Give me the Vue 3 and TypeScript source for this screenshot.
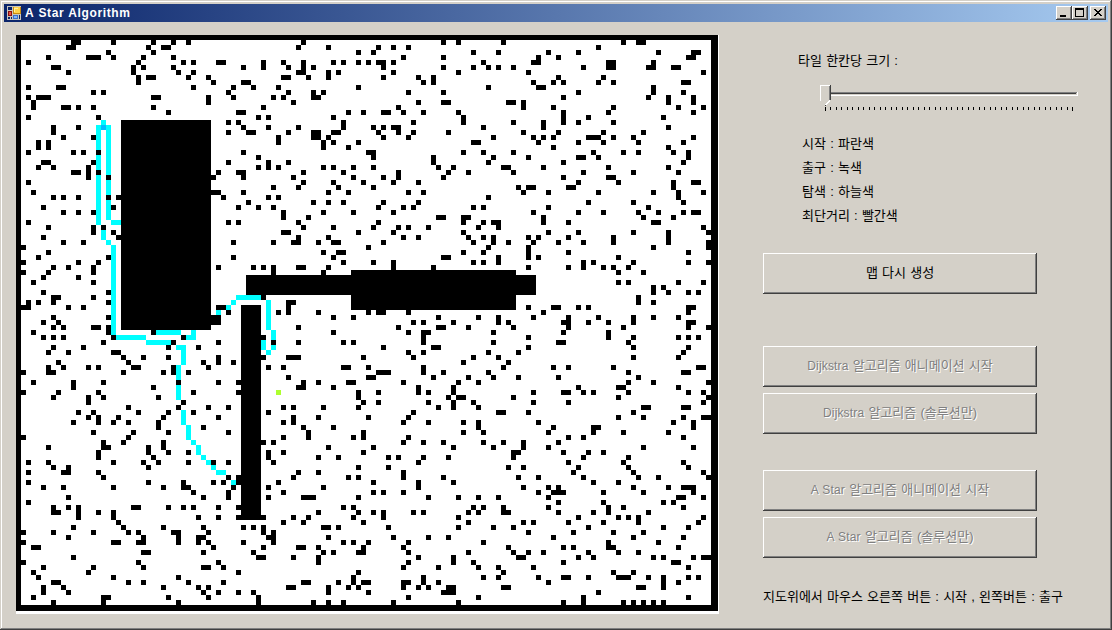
<script setup lang="ts">
interface Section {
  col: number
  row: number
  lines: string
}

const TILE = 5
const MAP_WIDTH = 702
const MAP_HEIGHT = 576

// Obstacle tiles by map section: one line per row, separated by "/",
// each entry a column or an inclusive range of columns.
const obstacles: Section[] = [
  {
    col: 0,
    row: 1,
    lines:
      '11-12 19 27 31 34/10-11 26 29-30/18 27/6 14-16 19 25 31/2 24 33 35 40-41/7-8 23 25 31/10 23 32 35/24 26-27 34 38/24 39/2 8-9 35 43/15 17 42/2 4-6 27-28 38 43/3 38/3 9-10 12 15 27',
  },
  {
    col: 0,
    row: 15,
    lines:
      '30 44-45/2 16/42 44/7 12 45/7 42 46-47/9 15/4 6/4 6/2 11 13 16 45//5-6 15 42/4 7 14/11-12 14 16 40 44-45/14 18 39 45/2//3 39-40 45/7 9 12 18 20 41/46/5 19 44/9 12 15//2 42 44/6 15 17/15 19/5 20/9 13 43/1/6/4 18 43/1 12 16/7 10 15 40 47/1 6 15/5 12/3 15//5 18/7-8 15/2 4 7 18/1-2 10 13 40-41/42/7 18 39-40/5 8 39-40/7 9 15-16 18/3 18 27/5 7 9 19 33',
  },
  {
    col: 0,
    row: 61,
    lines:
      '17 31 40 51/7 13 30 36/6 10 19-20/21 25 30 40 49 54-55/8 22 37 40 43/6 9 14 16 23-24 31 38 50 53/1 6-7 21 29 31 34/54/3 11 17 32 40 44/11 27/1 8 16 35 44/7 14 17 28/14 33/22 32 38 42/12 15 24 30 35/14 16 20 29 40/11 16 19 22 28/28 37/15 23 30 42/1 22/17 21 29/6 17-18 26 29/16 26 30 34/16 27/2 6 19 25 28 34 39 42/7 10 26/2 9-10 16/17 42 44/2 26 33 39 41 44/5 9 19 29 33-34 43/35 42/10 37 42/2/7 10 12 23-24 30 33 35 40 44/7-8 12 16 19/12 19 36 40 44-49/20 53/11 21 29 37 45 47 49/1 7 15 22 24 31-32 38 49 51/10 25 32 36-37 50-51/1 19-20 24-25 32 36 38 45 51/3-4 39 49/25-26 37 47/11 48-49 55/1 24 40/5 15 25 37-38 41/3 14 44/4 19 32/7-8 22 25 34 41/5 9 29 36 38 54-55/5 10 37 40 44 47/3 17-18 30 38 48/7 17 32 48',
  },
  {
    col: 44,
    row: 1,
    lines:
      '13 41 44/12 18 28 31 34/24 27 47/33 41/5 9 13 19 21 24 26 28-29 31/1 5 10 13 15 29 41 47/12-13 18 20 31 44/9-10 14 18 29 36 39/1-2 37 39/3 8 24/10 15 17 34 41/7 9 15-16/11 36 41-42/5 32/0-1 22 25 29-30 33 37 44/4 6 19 45/0 21 35 45/1 6 12 21 27 29 31-32/2-3 10 15-16 19-20 28 32 35 42/8 15-16 18 29 34/8 17 19 24 47/17 22/1 26-27 45/4 27 39/6 10 39/4 6 8 17 19 23 27 40 43/0-1 13 21 32 42 46/1 11 23 29 32 41/13 19 25 31 36/7 12 20 27/1 18 22 34 37/6 8/2 15 18 21 29 36/0 4 7 28 33 35 47/9 17 23 31/9 14 40-41 45-46/0 12 28 45/13 19 27 32 34 38/9-10 24 31 45/12 18 33 36 46/7 11-12 16 19-20 29 47/26',
  },
  {
    col: 92,
    row: 1,
    lines:
      '5 29 32-33/24/4 14 20 36 43-44/12 16 42-43/1 11-12 26-27 35/2 4 7 21 26-27 34-35 39-40/10 45/16 25/11 15 17 24 27 41-42/2 12-13 35/20 35 41/17 34 38 43/6-7 9 38 43/9 15 27 40 45/17 26 43/17 22 37/7 13 17 20 27/1 13 38/9 16 25 33/3 11 13 15 22-24 27 31 43/0 12 20 25 32 41/15 38/1 7 23 29 32 39 42/3 10 20-21 24 42/2 17 41/5-6 13 26 38/7 21 31 40/17 26-27/20 28 39 43-44/8 10-11 18-19 39/9 14 24 35 40 45/2 40/22 31 41/1 14 34/11 20 25 32 36 41 43-44/13 33 39/1 3-4 13 18 35-36/0 4 45/14 20 31 38 46/1 3 10 12 18 27 38/3 6 11 16 21 27 38 46/2 10 35 46',
  },
  {
    col: 44,
    row: 43,
    lines:
      '17 20-21 45/19 41-42/21 27 31 47/3 5 7 12-13 18 31 39/7 17/////5/10-11/10/8 10 16 26 28-29 34/19 23 40/35 37 43/12 32 40-41 46/19 34 37-38/5 37/7 12 21 23 37/29 39-40/34 37/5 10-12 25 35 47/45/6 9 21-22 26 37/28-30 37 41/10 26-27 39 46/0 13 16 22-23 33 44/12-13 19 36 43/0 24 28 36 38 43/24 42 44-45/25 28 38 43 47/9 11 17 24 40 43/6 35/11 16 26 34/9 11 33 38 45/13 19',
  },
  {
    col: 92,
    row: 43,
    lines:
      '1 10 18 42/4 10 12 28/1 4 21 23 31 42 46/10 18 21 25 27 30/28 33//28 30 40 45/35 37/35 38 42 44/32/32 35/10 15-16 20 22 42-43/13 42/0 4 11 18 24 31 35 40/4 6 17-18 22 26 31 42-43/7 18 29 42 46/3 17 26/10 26 31 40 42 44/3 16-17 30/10 31 42/2 8 41/4 31 40/6/5 15 18 27 44-45/2 30 41-42/3 8 16 32/0 30 35 46/20 28-29 40/11 17-18 21 23 30 42 45/7 28 46/11 18 45/0 33-34 41-42/4-5 10 31/28 33 41 45-46/0 12 39 43/0 15 23-24 43',
  },
  {
    col: 44,
    row: 79,
    lines:
      '14 25 45/9 14 23 25 34/5 7 33 37 41/18 27 43/6 9 25/6 16 20 30 32 37 42/7 36/24 30/12 16 33/0 11 22 24 33 41/0 8 27 36 43/6 17 36/9 27 29 33/6 13-15 24 38 44//0 21 23 47/16 24 27 29 35 37 46/0-5 11 14 23 29 44/9 13 25 46/1 3 5 17-18 20 30 44/5 7/6-7 18 31 38 42/1 7 21 23 26 34/5 12-13 16 25 33/3 17 19 24-25 34 46/4-5 11 16 36 43/16 34 43 47/33 40/0 24/23 37/13-14 20 23 25-26 33-34 37 40/10-11 18 22 24 33 36 38 42-43/0 3 18 26 41-43/4 34/4 15 18 21 31 44',
  },
  {
    col: 92,
    row: 79,
    lines:
      '1 14 23 29 38/18 21 41/1 5 9 16/3 9 14 33 43/7-8 17 22 25/7 21 30/18 29 41/6 9 20 30 42/19 31 45/8 12 21 32 36 46/23 28/9 14 16 31 38 41-43/12 15-17 25 33 43/0 4 14 40-41 45/16 25 37 39/1 5 14 26 29 41/0 5-6 16 23 26 34/20 28 30 32 45/9 11 18 25 32 44/3 7 22 37 42/10 19 27 33/15 31 41/1 26 36/6 17 19 26-27 40/7 10 13 22 28 32/8-9 20 23 35 37 43 45-46/17 39-40/0 4 11 42/5 27 31/1 4 12 17-18 22 28-30 34 37 42 44/14 37 40/5-6 32-33 37/24/0 21 42/17 21 29 31 33 35 37',
  },
]

// Solid walls: column, row, columns, rows
const walls: number[][] = [
  [21, 17, 18, 42],
  [46, 48, 58, 4],
  [67, 47, 33, 8],
  [45, 54, 4, 43],
]

// Explored tiles: column, row, columns, rows
const explored: number[][] = [
  [17, 17, 1, 1], [16, 18, 1, 20], [18, 18, 1, 19], [19, 37, 2, 1],
  [17, 39, 1, 2], [18, 41, 1, 1], [19, 42, 1, 18], [20, 60, 6, 1],
  [26, 61, 5, 1], [28, 59, 5, 1], [35, 59, 1, 1], [34, 60, 2, 1],
  [32, 62, 2, 1], [33, 63, 1, 3], [32, 66, 1, 3], [32, 70, 1, 3],
  [33, 75, 1, 3], [34, 78, 1, 3], [35, 81, 1, 1], [36, 82, 1, 2],
  [37, 84, 1, 1], [38, 85, 1, 1], [39, 86, 1, 1], [40, 87, 2, 1],
  [43, 89, 1, 1], [40, 55, 1, 1], [42, 54, 1, 1], [43, 53, 1, 1],
  [44, 52, 5, 1], [50, 53, 1, 6], [51, 59, 1, 2], [51, 62, 1, 1],
  [49, 61, 1, 2], [50, 63, 1, 1],
]

const box = (c: number, r: number, w: number, h: number): string =>
  `M${c * TILE} ${r * TILE}h${w * TILE}v${h * TILE}h${-w * TILE}z`

const sectionPath = (section: Section): string =>
  section.lines
    .split('/')
    .map((line, i) =>
      line
        .split(' ')
        .filter(Boolean)
        .map((entry) => {
          const [from, to = from] = entry.split('-').map(Number)
          return box(section.col + from, section.row + i, to - from + 1, 1)
        })
        .join(''),
    )
    .join('')

const boxes = (list: number[][]): string => list.map(([c, r, w, h]) => box(c, r, w, h)).join('')

const obstaclePath = obstacles.map(sectionPath).join('')
const wallPath = boxes(walls)
const exploredPath = boxes(explored)
const startPath = box(17, 18, 1, 1)
const exitPath = box(52, 71, 1, 1)

const ticks = Array.from({ length: 46 }, (_, i) => ({
  x: 5 + Math.round((i * 247) / 45),
  h: i === 0 || i === 45 ? 4 : 3,
}))

const legend = ['시작 : 파란색', '출구 : 녹색', '탐색 : 하늘색', '최단거리 : 빨간색']

const solvers = [
  { name: 'Dijkstra', cls: 'dijkstra' },
  { name: 'A Star', cls: 'astar' },
]
</script>

<template>
  <div class="window">
    <header class="titlebar">
      <svg class="app-icon" width="14" height="14" shape-rendering="crispEdges">
        <path fill="#c8c4bc" d="M0 0h14v14H0z" />
        <path fill="#0a246a" d="M1 1h4v3H1zM1 11h2v2H1zM4 11h1v2H4zM12 9h1v4h-1z" />
        <path fill="#8c1010" d="M1 5h4v5H1z" />
        <path fill="#e85040" d="M2 6h2v3H2z" />
        <path fill="#c88a10" d="M6 1h8v7H6z" />
        <path fill="#ffd24a" d="M7 1h6v6H7z" />
        <path fill="#fff0a0" d="M7 2h4v1H7zM7 3h1v3H7z" />
        <path fill="#3c70c8" d="M6 9h5v4H6z" />
        <path fill="#80b4ff" d="M7 10h3v2H7z" />
      </svg>
      <span class="title">A Star Algorithm</span>
      <div class="caption-buttons">
        <button class="raised caption" aria-label="Minimize">
          <svg width="16" height="14" shape-rendering="crispEdges"><path d="M4 9h6v2H4z" /></svg>
        </button>
        <button class="raised caption" aria-label="Maximize">
          <svg width="16" height="14" shape-rendering="crispEdges">
            <path fill-rule="evenodd" d="M3 2h9v9H3zM4 4v6h7V4z" />
          </svg>
        </button>
        <button class="raised caption close" aria-label="Close">
          <svg width="16" height="14" shape-rendering="crispEdges">
            <path d="M4 3h2v1H4zM10 3h2v1h-2zM5 4h2v1H5zM9 4h2v1H9zM6 5h4v1H6zM7 6h2v1H7zM6 7h4v1H6zM5 8h2v1H5zM9 8h2v1H9zM4 9h2v1H4zM10 9h2v1h-2z" />
          </svg>
        </button>
      </div>
    </header>

    <main class="content">
      <div class="map">
        <svg :width="MAP_WIDTH" :height="MAP_HEIGHT" shape-rendering="crispEdges">
          <path fill="#00ffff" :d="exploredPath" />
          <path :d="obstaclePath" />
          <path :d="wallPath" />
          <path fill="#00bfff" :d="startPath" />
          <path fill="#adff2f" :d="exitPath" />
          <path fill-rule="evenodd" d="M0 0H702V576H0zM5 5V570H695V5z" />
        </svg>
      </div>

      <aside class="panel">
        <div class="size-label">타일 한칸당 크기 :</div>
        <svg class="slider" width="262" height="30" shape-rendering="crispEdges">
          <path fill="#808080" d="M10 7h247v1H10z" />
          <path fill="#404040" d="M10 8h246v1H10z" />
          <path fill="#fff" d="M10 10h248v1H10zM257 7h1v4h-1z" />
          <path fill="#d4d0c8" d="M0 0h11v16H0z" />
          <path fill="#fff" d="M0 0h10v1H0zM0 0h1v16H0zM9 15h1v1H9zM8 16h2v1H8zM7 17h2v1H7zM6 18h2v1H6zM5 19h2v1H5z" />
          <path fill="#808080" d="M9 1h1v14H9z" />
          <path fill="#404040" d="M10 0h1v15h-1zM5 20h1v1H5z" />
          <rect v-for="tick in ticks" :key="tick.x" :x="tick.x" y="22" width="1" :height="tick.h" />
        </svg>

        <ul class="legend">
          <li v-for="item in legend" :key="item">{{ item }}</li>
        </ul>

        <button class="raised action">맵 다시 생성</button>

        <div v-for="solver in solvers" :key="solver.name" class="solver" :class="solver.cls">
          <button class="raised action" disabled>
            <span class="latin">{{ solver.name }}</span> 알고리즘 애니메이션 시작
          </button>
          <button class="raised action" disabled>
            <span class="latin">{{ solver.name }}</span> 알고리즘 (솔루션만)
          </button>
        </div>

        <p class="hint">지도위에서 마우스 오른쪽 버튼 : 시작 , 왼쪽버튼 : 출구</p>
      </aside>
    </main>
  </div>
</template>

<style>
html,
body {
  margin: 0;
  overflow: hidden;
}
</style>

<style scoped>
.window {
  box-sizing: border-box;
  width: 1112px;
  height: 630px;
  padding: 4px;
  background: #d4d0c8;
  box-shadow:
    inset -1px -1px #404040,
    inset 1px 1px #d4d0c8,
    inset -2px -2px #808080,
    inset 2px 2px #fff;
  color: #000;
  font: 13px/18px 'Liberation Sans', 'Noto Sans CJK KR', sans-serif;
  word-spacing: 0.6px;
}

.titlebar {
  display: flex;
  align-items: center;
  height: 18px;
  padding: 0 2px 0 3px;
  background: linear-gradient(to right, #0a246a, #a6caf0);
}

.app-icon {
  display: block;
}

.title {
  margin-left: 4px;
  color: #fff;
  font: bold 12px/18px 'Liberation Sans', sans-serif;
  letter-spacing: 0.62px;
}

.caption-buttons {
  display: flex;
  margin-left: auto;
}

.raised {
  display: block;
  border: 0;
  padding: 0;
  background: #d4d0c8;
  box-shadow:
    inset -1px -1px #404040,
    inset 1px 1px #fff,
    inset -2px -2px #808080;
  color: #000;
  font: inherit;
  word-spacing: inherit;
}

.caption {
  width: 16px;
  height: 14px;
}

.caption svg {
  display: block;
}

.close {
  margin-left: 2px;
}

.content {
  display: flex;
  padding: 13px 0 0 12px;
}

.map {
  width: 702px;
  height: 576px;
  padding: 0 1px 3px 0;
  background: #fff;
}

.map svg {
  display: block;
}

.panel {
  width: 330px;
  padding: 17px 0 0 44px;
  white-space: nowrap;
}

.size-label {
  margin-left: 35px;
}

.slider {
  display: block;
  margin: 15px 0 0 57px;
}

.legend {
  height: 92px;
  margin: 17px 0 29px 39px;
  padding: 0;
  list-style: none;
  line-height: 24px;
}

.action {
  width: 274px;
  height: 41px;
  padding-bottom: 2px;
}

.action:disabled {
  color: #808080;
  text-shadow: 1px 1px #fff;
}

.solver {
  display: grid;
  gap: 6px;
}

.dijkstra {
  margin-top: 52px;
}

.astar {
  margin-top: 36px;
}

.latin {
  font-size: 12px;
  letter-spacing: 0.15px;
}

.hint {
  margin: 30px 0 0;
}
</style>
